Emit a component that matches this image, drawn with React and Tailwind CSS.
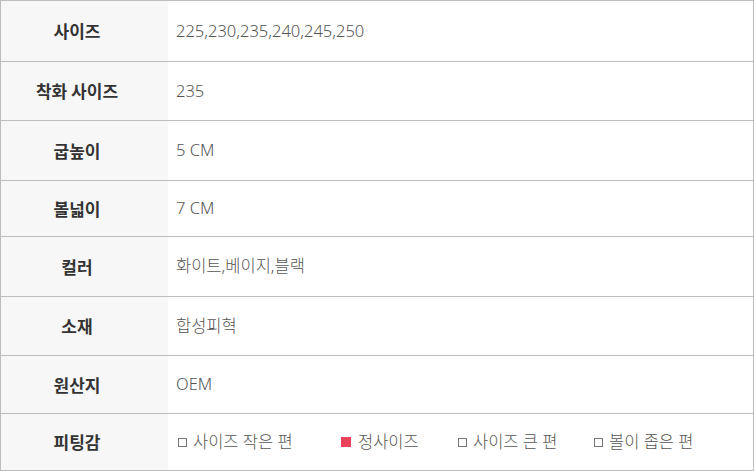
const rows = [
  { label: '사이즈', value: '225,230,235,240,245,250', h: 'h-[61px]' },
  { label: '착화 사이즈', value: '235', h: 'h-[59px]' },
  { label: '굽높이', value: '5 CM', h: 'h-[60px]' },
  { label: '볼넓이', value: '7 CM', h: 'h-[56px]' },
  { label: '컬러', value: '화이트,베이지,블랙', h: 'h-[60px]' },
  { label: '소재', value: '합성피혁', h: 'h-[59px]' },
  { label: '원산지', value: 'OEM', h: 'h-[58px]' },
]

const fits = [
  { text: '사이즈 작은 편', on: false, w: 'w-[163px]' },
  { text: '정사이즈', on: true, w: 'w-[117px]' },
  { text: '사이즈 큰 편', on: false, w: 'w-[136px]' },
  { text: '볼이 좁은 편', on: false, w: '' },
]

function Box({ on }) {
  return on ? (
    <span className="inline-block w-[10px] h-[10px] bg-[#e8435a] mr-[7px]" />
  ) : (
    <span className="inline-block w-[9px] h-[9px] border border-[#777] mr-[6px]" />
  )
}

const labelCls =
  'w-[167px] shrink-0 bg-[#f7f7f7] flex items-center justify-center pr-[15px] text-[17px] font-bold text-[#333]'
const valueCls = 'flex-1 flex items-center text-[16.5px] text-[#555]'
const valueFont = { fontFamily: '"Noto Sans", "Noto Sans CJK KR", sans-serif', fontWeight: 300 }

export default function App() {
  return (
    <div className="w-[754px] h-[471px] bg-white" style={{ fontFamily: '"Noto Sans CJK KR", "Noto Sans", sans-serif' }}>
      <div className="border-t border-x border-[#bdbdbd]">
        {rows.map((r) => (
          <div key={r.label} className={`flex ${r.h} border-b border-[#bdbdbd]`}>
            <div className={labelCls}>{r.label}</div>
            <div className={`${valueCls} pl-[8px]`} style={valueFont}>
              {r.value}
            </div>
          </div>
        ))}
        <div className="flex h-[57px] border-b border-[#bdbdbd]">
          <div className={labelCls}>피팅감</div>
          <div className={`${valueCls} pl-[10px]`} style={valueFont}>
            {fits.map((f) => (
              <div key={f.text} className={`flex items-center ${f.w}`}>
                <Box on={f.on} />
                <span>{f.text}</span>
              </div>
            ))}
          </div>
        </div>
      </div>
    </div>
  )
}
